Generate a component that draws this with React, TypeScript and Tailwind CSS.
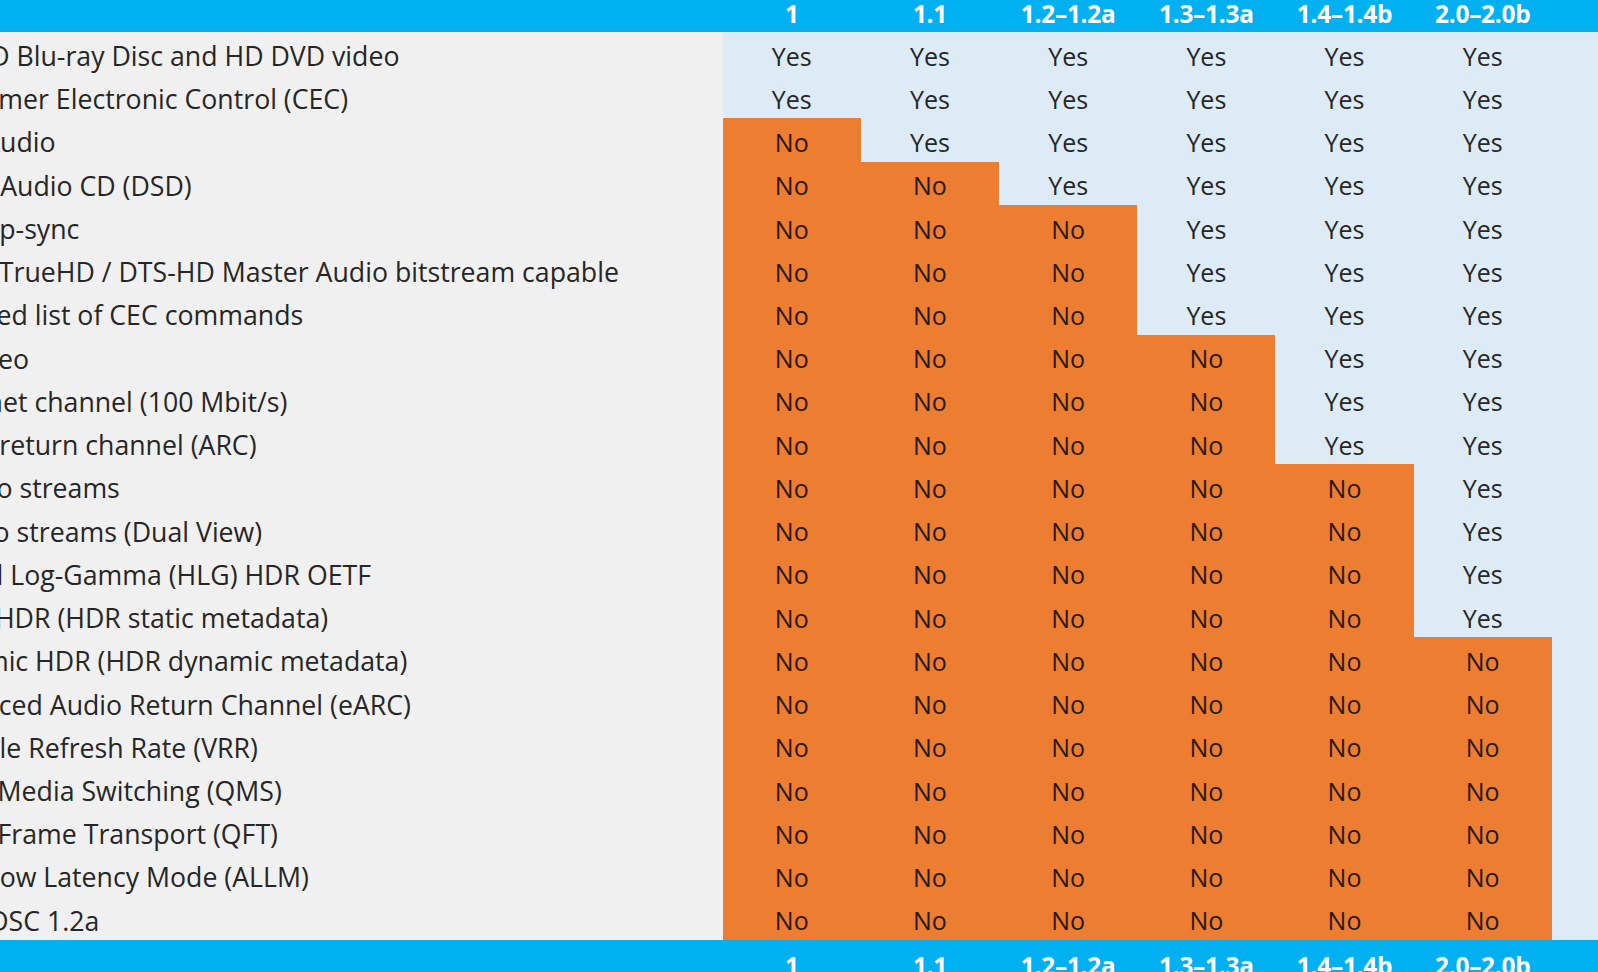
import React from 'react';

const versions = ['1', '1.1', '1.2–1.2a', '1.3–1.3a', '1.4–1.4b', '2.0–2.0b'];

// first row index (0-based) where each version column turns to "No"
const firstNo = [2, 3, 4, 7, 10, 14];

const features = [
  'Full HD Blu-ray Disc and HD DVD video',
  'Consumer Electronic Control (CEC)',
  'DVD-Audio',
  'Super Audio CD (DSD)',
  'Auto lip-sync',
  'Dolby TrueHD / DTS-HD Master Audio bitstream capable',
  'Updated list of CEC commands',
  '3D video',
  'Ethernet channel (100 Mbit/s)',
  'Audio return channel (ARC)',
  '4 audio streams',
  '2 video streams (Dual View)',
  'Hybrid Log-Gamma (HLG) HDR OETF',
  'Static HDR (HDR static metadata)',
  'Dynamic HDR (HDR dynamic metadata)',
  'Enhanced Audio Return Channel (eARC)',
  'Variable Refresh Rate (VRR)',
  'Quick Media Switching (QMS)',
  'Quick Frame Transport (QFT)',
  'Auto Low Latency Mode (ALLM)',
  'VESA DSC 1.2a',
];

const font = { fontFamily: '"Open Sans", "Noto Sans", sans-serif' };

const HeaderBar: React.FC<{ bottom?: boolean }> = ({ bottom }) => (
  <div className={`flex h-[32px] w-full shrink-0 bg-[#00b0f0] ${bottom ? 'items-start pt-[12px]' : 'items-start pt-0'}`}>
    <div className="w-[722.7px] shrink-0" />
    {versions.map((v) => (
      <div key={v} className="w-[138.2px] shrink-0 text-center text-[24.5px] font-bold leading-[28px] tracking-[-0.3px] text-white">
        {v}
      </div>
    ))}
  </div>
);

export default function App() {
  return (
    <div className="flex h-[972px] w-[1598px] flex-col overflow-hidden bg-[#ddebf7] text-[#262626]" style={font}>
      <HeaderBar />
      <div className="flex flex-col">
        {features.map((label, i) => (
          <div key={label} className="flex h-[43.24px]">
            <div className="relative w-[722.7px] shrink-0 overflow-hidden bg-[#f0f0f0]">
              <span className="absolute left-[-80px] top-[9px] whitespace-nowrap text-[26.7px] leading-[30px]">
                {label}
              </span>
            </div>
            {versions.map((v, c) => {
              const no = i >= firstNo[c];
              return (
                <div
                  key={v}
                  className={`flex w-[138.2px] shrink-0 items-center justify-center pt-[4px] text-[25px] leading-[30px] ${no ? 'bg-[#ed7d31] text-[#2a1a10]' : 'text-[#262626]'}`}
                >
                  {no ? 'No' : 'Yes'}
                </div>
              );
            })}
          </div>
        ))}
      </div>
      <HeaderBar bottom />
    </div>
  );
}
